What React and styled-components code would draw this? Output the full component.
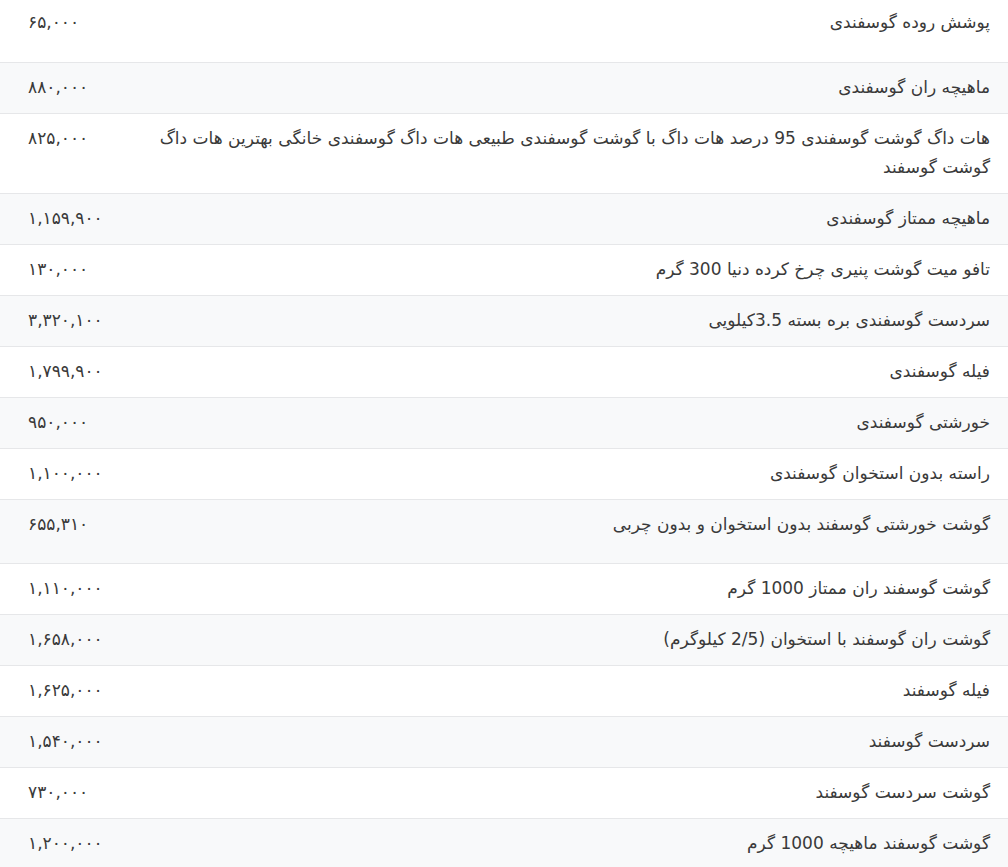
import React from 'react';
import styled, { createGlobalStyle } from 'styled-components';

const GlobalStyle = createGlobalStyle`
  html, body {
    margin: 0;
    padding: 0;
    background: #fff;
  }
  body {
    font-family: "DejaVu Sans", "Noto Sans", sans-serif;
    color: #3a3a3a;
  }
`;

const StyledWrapper = styled.div`
  width: 1008px;
  margin-top: -2px;
  overflow: hidden;
`;

const StyledTable = styled.table`
  width: 100%;
  direction: rtl;
  border-collapse: collapse;
  font-size: 17px;
`;

const StyledRow = styled.tr`
  background: ${({ $striped }) => ($striped ? '#f8f9fa' : '#fff')};
  border-bottom: 1px solid #e6e7e9;
  height: ${({ $tall }) => ($tall ? '64px' : 'auto')};
`;

const NameCell = styled.td`
  text-align: right;
  vertical-align: top;
  line-height: 29px;
  padding: 10px 18px 11px 0;
`;

const PriceCell = styled.td`
  width: 76px;
  text-align: left;
  vertical-align: top;
  line-height: 29px;
  padding: 10px 6px 11px 28px;
  white-space: nowrap;
`;

const items = [
  { name: 'پوشش روده گوسفندی', price: '۶۵,۰۰۰', tall: true },
  { name: 'ماهیچه ران گوسفندی', price: '۸۸۰,۰۰۰' },
  {
    name: 'هات داگ گوشت گوسفندی 95 درصد هات داگ با گوشت گوسفندی طبیعی هات داگ گوسفندی خانگی بهترین هات داگ گوشت گوسفند',
    price: '۸۲۵,۰۰۰',
  },
  { name: 'ماهیچه ممتاز گوسفندی', price: '۱,۱۵۹,۹۰۰' },
  { name: 'تافو میت گوشت پنیری چرخ کرده دنیا 300 گرم', price: '۱۳۰,۰۰۰' },
  { name: 'سردست گوسفندی بره بسته 3.5کیلویی', price: '۳,۳۲۰,۱۰۰' },
  { name: 'فیله گوسفندی', price: '۱,۷۹۹,۹۰۰' },
  { name: 'خورشتی گوسفندی', price: '۹۵۰,۰۰۰' },
  { name: 'راسته بدون استخوان گوسفندی', price: '۱,۱۰۰,۰۰۰' },
  { name: 'گوشت خورشتی گوسفند بدون استخوان و بدون چربی', price: '۶۵۵,۳۱۰', tall: true },
  { name: 'گوشت گوسفند ران ممتاز 1000 گرم', price: '۱,۱۱۰,۰۰۰' },
  { name: 'گوشت ران گوسفند با استخوان (2/5 کیلوگرم)', price: '۱,۶۵۸,۰۰۰' },
  { name: 'فیله گوسفند', price: '۱,۶۲۵,۰۰۰' },
  { name: 'سردست گوسفند', price: '۱,۵۴۰,۰۰۰' },
  { name: 'گوشت سردست گوسفند', price: '۷۳۰,۰۰۰' },
  { name: 'گوشت گوسفند ماهیچه 1000 گرم', price: '۱,۲۰۰,۰۰۰' },
];

const App = () => (
  <>
    <GlobalStyle />
    <StyledWrapper>
      <StyledTable>
        <tbody>
          {items.map((item, i) => (
            <StyledRow key={item.name} $striped={i % 2 === 1} $tall={item.tall}>
              <NameCell>{item.name}</NameCell>
              <PriceCell>{item.price}</PriceCell>
            </StyledRow>
          ))}
        </tbody>
      </StyledTable>
    </StyledWrapper>
  </>
);

export default App;
